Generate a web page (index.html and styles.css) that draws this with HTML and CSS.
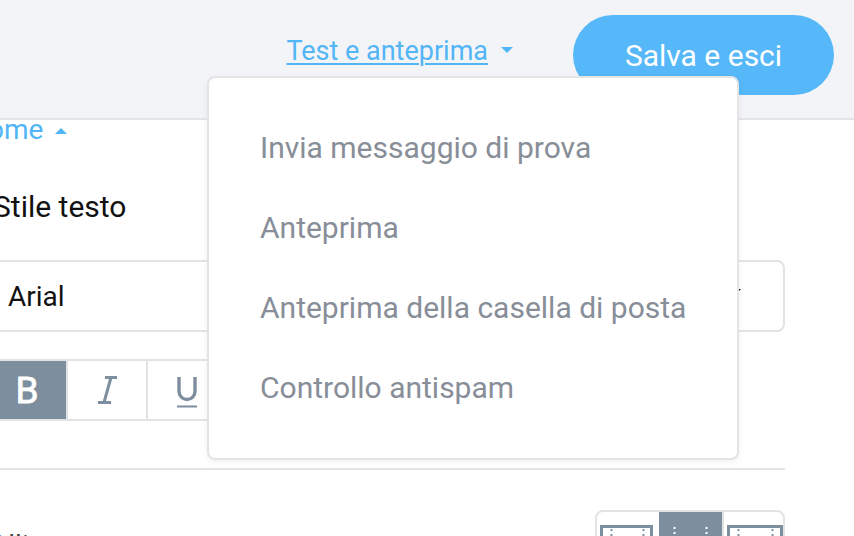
FILE: index.html
```html
<!DOCTYPE html>
<html lang="it">
<head>
<meta charset="utf-8">
<title>Editor</title>
<link rel="stylesheet" href="styles.css">
</head>
<body>
<header class="topbar">
  <a class="test-link" href="#"><span class="test-label">Test e anteprima</span><span class="caret-down"></span></a>
  <button class="save-btn">Salva e esci</button>
</header>
<main class="content">
  <div class="toggle"><span>Nome</span><span class="caret-up"></span></div>
  <h3 class="section-title">Stile testo</h3>
  <div class="select"><span>Arial</span><span class="select-caret"></span></div>
  <div class="toolbar">
    <button class="tool active">B</button>
    <button class="tool"><svg class="ico-i" width="24" height="28" viewBox="0 0 24 28"><path d="M9 1.5H21M2 26.5H15M15 1.5L8 26.5" fill="none" stroke="#7d8e9e" stroke-width="3"/></svg></button>
    <button class="tool"><svg class="ico-u" width="22" height="31" viewBox="0 0 22 31"><path d="M3 0V14.5A8 8 0 0 0 19 14.5V0" fill="none" stroke="#7d8e9e" stroke-width="3.4"/><path d="M1 29.5H21" stroke="#7d8e9e" stroke-width="2"/></svg></button>
    <button class="tool"><svg width="22" height="31" viewBox="0 0 22 31"><path d="M18 5C16 2 13 1 11 1 7 1 4 3 4 6.5 4 14 18 11 18 19.5 18 23 15 25 11 25 8 25 5 23.5 3.5 21M1 13H21" fill="none" stroke="#7d8e9e" stroke-width="3"/></svg></button>
  </div>
  <hr class="divider">
  <div class="align-row">
    <span class="align-label">Allineamento</span>
    <div class="align-group">
      <div class="align-btn first">
        <svg width="56" height="30" viewBox="0 0 56 30"><rect x="1.5" y="1.5" width="50" height="40" fill="none" stroke="#7d8e9e" stroke-width="3"/><path d="M11.5 4V30M43.5 4V30" stroke="#7d8e9e" stroke-width="2" stroke-dasharray="2 3"/></svg>
      </div>
      <div class="align-btn mid active">
        <svg width="56" height="30" viewBox="0 0 56 30"><path d="M15.5 2V30M47.5 2V30" stroke="#ffffff" stroke-width="2" stroke-dasharray="2 3"/></svg>
      </div>
      <div class="align-btn last">
        <svg width="58" height="30" viewBox="0 0 58 30"><rect x="1.5" y="1.5" width="53" height="40" fill="none" stroke="#7d8e9e" stroke-width="3"/><path d="M11.5 4V30M45.5 4V30" stroke="#7d8e9e" stroke-width="2" stroke-dasharray="2 3"/></svg>
      </div>
    </div>
  </div>
</main>
<div class="dropdown">
  <div class="dd-item">Invia messaggio di prova</div>
  <div class="dd-item">Anteprima</div>
  <div class="dd-item">Anteprima della casella di posta</div>
  <div class="dd-item">Controllo antispam</div>
</div>
</body>
</html>
```
FILE: styles.css
```css
html, body {
  margin: 0;
  padding: 0;
}
body {
  width: 854px;
  height: 536px;
  overflow: hidden;
  position: relative;
  background: #ffffff;
  font-family: Roboto, "Noto Sans", Arial, sans-serif;
}

.topbar {
  height: 120px;
  box-sizing: border-box;
  background: #f2f4f8;
  border-bottom: 2px solid #e3e4e6;
  display: flex;
  justify-content: flex-end;
  align-items: flex-start;
  padding: 15px 20px 0 0;
}
.test-link {
  display: flex;
  align-items: center;
  margin-top: 18px;
  margin-right: 60px;
  color: #52b5f6;
  font-size: 27px;
  line-height: 36px;
  text-decoration: none;
}
.test-label {
  text-decoration: underline;
  text-decoration-thickness: 2px;
  text-underline-offset: 3px;
}
.caret-down {
  width: 0;
  height: 0;
  border-left: 6px solid transparent;
  border-right: 6px solid transparent;
  border-top: 6px solid #52b5f6;
  margin-left: 13px;
  margin-top: -2px;
}
.save-btn {
  width: 261px;
  height: 80px;
  padding: 0;
  border: 0;
  border-radius: 40px;
  background: #56b8f9;
  color: #ffffff;
  font-family: Roboto, "Noto Sans", Arial, sans-serif;
  font-size: 30px;
}

.content {
  margin-left: -32px;
  width: 817px;
}
.toggle {
  display: flex;
  align-items: flex-start;
  font-size: 28px;
  line-height: 20px;
  color: #52b5f6;
}
.caret-up {
  width: 0;
  height: 0;
  border-left: 6px solid transparent;
  border-right: 6px solid transparent;
  border-bottom: 6px solid #52b5f6;
  margin-left: 12px;
  margin-top: 8px;
}
.section-title {
  margin: 47px 0 0;
  padding-left: 25px;
  font-size: 30px;
  font-weight: 400;
  line-height: 40px;
  color: #111111;
}
.select {
  margin-top: 33px;
  height: 72px;
  box-sizing: border-box;
  border: 2px solid #e3e3e3;
  border-radius: 8px;
  display: flex;
  align-items: center;
  justify-content: space-between;
  padding: 0 42px 0 38px;
  font-size: 28px;
  color: #111111;
}
.select-caret {
  width: 0;
  height: 0;
  border-left: 6px solid transparent;
  border-right: 6px solid transparent;
  border-top: 6px solid #111111;
  margin-top: -8px;
}

.toolbar {
  margin-top: 27px;
  margin-left: 20px;
  height: 62px;
  box-sizing: border-box;
  border-top: 2px solid #e3e3e3;
  border-bottom: 2px solid #e3e3e3;
  display: flex;
  width: max-content;
}
.tool {
  width: 80px;
  box-sizing: border-box;
  padding: 0;
  border: 0;
  border-right: 2px solid #e3e3e3;
  background: #ffffff;
  display: flex;
  align-items: center;
  justify-content: center;
  font-family: Roboto, "Noto Sans", Arial, sans-serif;
}
.tool.active {
  background: #7d8e9e;
  color: #ffffff;
  font-size: 37px;
  font-weight: 400;
  line-height: 1;
  -webkit-text-stroke: 0.8px #ffffff;
}
.ico-i {
  margin-left: 2px;
}
.ico-u {
  margin-top: 4px;
}

.divider {
  margin: 47px 0 0;
  border: 0;
  height: 2px;
  background: #e3e3e3;
}

.align-row {
  margin-top: 40px;
  display: flex;
  justify-content: space-between;
  align-items: flex-start;
}
.align-label {
  margin-top: 16px;
  padding-left: 22px;
  font-size: 28px;
  line-height: 40px;
  color: #444444;
}
.align-group {
  width: 190px;
  height: 60px;
  box-sizing: border-box;
  border: 2px solid #e3e3e3;
  border-radius: 8px;
  display: flex;
  overflow: hidden;
}
.align-btn {
  box-sizing: border-box;
  padding-top: 13px;
}
.align-btn svg {
  display: block;
}
.align-btn.first {
  width: 62px;
  padding-left: 3px;
}
.align-btn.mid {
  width: 63px;
}
.align-btn.active {
  background: #7d8e9e;
}
.align-btn.last {
  width: 61px;
  border-left: 2px solid #e3e3e3;
  padding-left: 3px;
}

.dropdown {
  position: absolute;
  left: 207px;
  top: 76px;
  width: 532px;
  height: 384px;
  box-sizing: border-box;
  background: #ffffff;
  border: 2px solid #e4e4e4;
  border-radius: 8px;
  padding: 30px 0 0 51px;
  box-shadow: 0 2px 6px rgba(0, 0, 0, 0.06);
}
.dd-item {
  font-size: 30px;
  line-height: 80px;
  color: #878e98;
  white-space: nowrap;
}
```
